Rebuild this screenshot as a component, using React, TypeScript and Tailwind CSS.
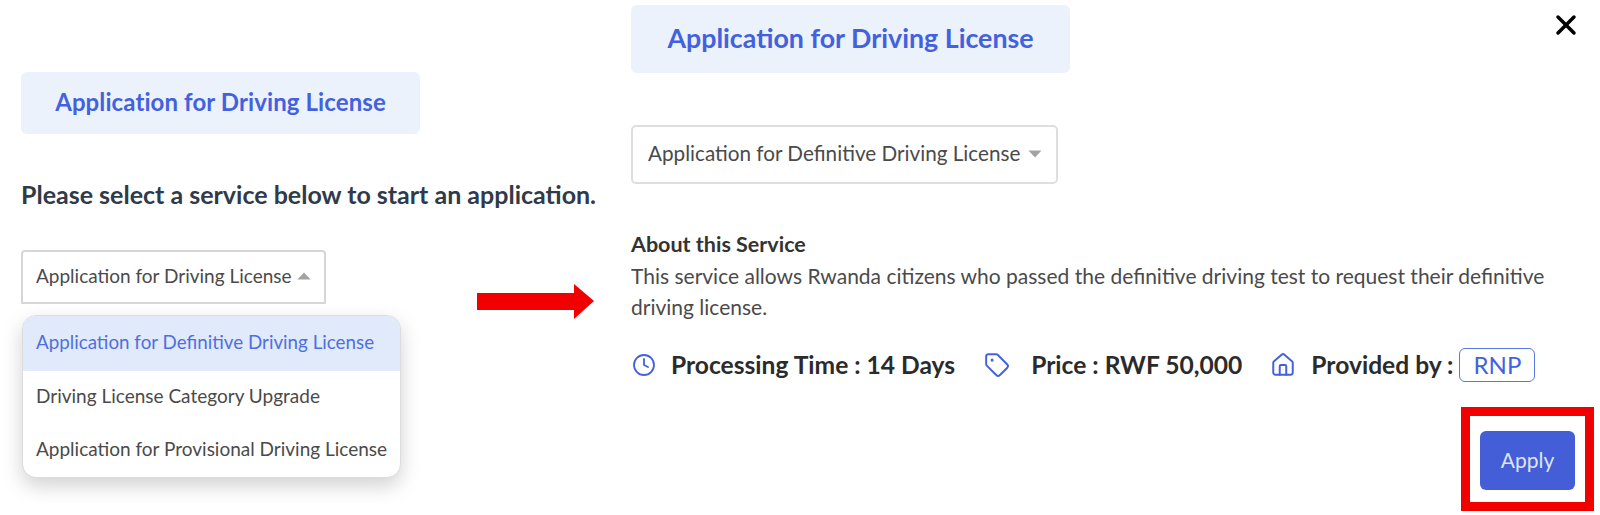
import { Clock, Tag, House, X } from "lucide-react";

const options = [
  "Application for Definitive Driving License",
  "Driving License Category Upgrade",
  "Application for Provisional Driving License",
];

function Caret({ up = false }: { up?: boolean }) {
  return (
    <svg width="14" height="8" viewBox="0 0 14 8" className="shrink-0 text-[#a3a3a3]">
      <path d={up ? "M7 0.5 L13.5 7.5 L0.5 7.5 Z" : "M0.5 0.5 L13.5 0.5 L7 7.5 Z"} fill="currentColor" />
    </svg>
  );
}

export default function App() {
  return (
    <div className="relative flex h-[515px] w-[1600px] overflow-hidden bg-white font-['Lato',sans-serif] text-[#4a4a4a]">
      {/* Left: service picker open */}
      <div className="w-[631px] shrink-0 pl-[21px] pt-[72px]">
        <div className="flex h-[62px] w-[399px] items-center justify-center rounded-md bg-[#ebf2fc] pb-[2px] text-[24px] font-bold tracking-[0.1px] text-[#4361de]">
          Application for Driving License
        </div>
        <h2 className="mt-[46px] text-[25px] leading-[28px] font-bold whitespace-nowrap text-[#2f3a4a]">
          Please select a service below to start an application.
        </h2>
        <div className="mt-[42px] flex h-[54px] w-[305px] items-center justify-between rounded-t border-2 border-[#d6d6d6] pr-[13px] pl-[13px] pb-[2px] text-[19px]">
          <span className="whitespace-nowrap">Application for Driving License</span>
          <Caret up />
        </div>
        <ul className="mt-[11px] ml-[1px] w-[379px] overflow-hidden rounded-[14px] border border-[#dcdcdc] bg-white text-[19px] shadow-[0_8px_20px_rgba(0,0,0,0.18)]">
          {options.map((o, i) => (
            <li
              key={o}
              className={`flex h-[53px] items-center pb-[2px] pl-[13px] whitespace-nowrap ${
                i === 0 ? "h-[55px] bg-[#e0eafa] text-[18.8px] text-[#4f6fe0]" : ""
              }`}
            >
              {o}
            </li>
          ))}
        </ul>
      </div>

      {/* Right: selected service detail */}
      <div className="flex-1 pt-[5px] pr-[6px]">
        <div className="flex items-start justify-between">
          <div className="flex h-[68px] w-[439px] items-center justify-center rounded-md bg-[#ebf2fc] pb-[2px] text-[26.8px] font-bold text-[#4361de]">
            Application for Driving License
          </div>
          <X className="mt-[4px] mr-[12px] h-[32px] w-[32px] text-black" strokeWidth={2.6} />
        </div>
        <div className="mt-[52px] flex h-[59px] w-[427px] items-center justify-between rounded-[5px] border-2 border-[#dedede] pr-[14px] pb-[2px] pl-[15px] text-[20.7px]">
          <span className="whitespace-nowrap">Application for Definitive Driving License</span>
          <Caret />
        </div>
        <h3 className="mt-[45px] text-[21.5px] leading-[31px] font-bold text-[#333]">About this Service</h3>
        <p className="w-[930px] text-[21px] leading-[31px]">
          This service allows Rwanda citizens who passed the definitive driving test to request their definitive driving license.
        </p>
        <div className="mt-[25px] flex h-[36px] items-center text-[24.6px] font-bold text-[#2b2b2b]">
          <Clock className="ml-[1px] h-[24px] w-[24px] text-[#4361de]" strokeWidth={1.8} />
          <span className="ml-[15px] whitespace-nowrap">Processing Time : 14 Days</span>
          <Tag className="ml-[29px] h-[26px] w-[26px] text-[#4361de]" strokeWidth={1.8} />
          <span className="ml-[21px] whitespace-nowrap">Price : RWF 50,000</span>
          <House className="ml-[28px] h-[26px] w-[26px] text-[#4361de]" strokeWidth={1.8} />
          <span className="ml-[15px] whitespace-nowrap">Provided by :</span>
          <span className="ml-[6px] flex h-[34px] w-[76px] items-center justify-center rounded-md border border-[#5a78e4] text-[24px] font-normal text-[#4361de]">
            RNP
          </span>
        </div>
        <div className="mt-[24px] flex justify-end">
          <div className="border-[9px] border-[#f20000] px-[10px] pt-[15px] pb-[12px]">
            <button className="h-[59px] w-[95px] rounded-md bg-[#435ed6] pb-[2px] text-[21px] text-[#dfe5fa]">Apply</button>
          </div>
        </div>
      </div>

      {/* Annotation arrow between the two steps */}
      <svg className="absolute top-[284px] left-[477px]" width="117" height="35" viewBox="0 0 117 35">
        <path d="M0 9 H97 V0 L117 17 L97 35 V26 H0 Z" fill="#f20000" />
      </svg>
    </div>
  );
}
